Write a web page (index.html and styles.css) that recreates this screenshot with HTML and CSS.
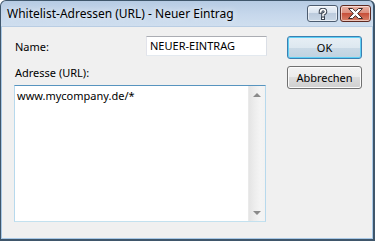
FILE: index.html
```html
<!DOCTYPE html>
<html lang="de">
<head>
<meta charset="utf-8">
<title>Whitelist-Adressen (URL) - Neuer Eintrag</title>
<link rel="stylesheet" href="styles.css">
</head>
<body>
<div class="window">
  <div class="titlebar">
    <span class="title">Whitelist-Adressen (URL) - Neuer Eintrag</span>
    <div class="caps">
      <div class="cap help">
        <svg width="10" height="12" viewBox="0 0 10 12">
          <path d="M2.5 4 Q2.5 1.5 5 1.5 Q7.5 1.5 7.5 3.8 Q7.5 5.2 5 6.3 L5 7.6" fill="none" stroke="#3a4452" stroke-width="3.6" stroke-linecap="square"/>
          <rect x="3" y="8.6" width="4" height="3.4" fill="#3a4452"/>
          <path d="M2.5 4 Q2.5 1.5 5 1.5 Q7.5 1.5 7.5 3.8 Q7.5 5.2 5 6.3 L5 7.6" fill="none" stroke="#fff" stroke-width="1.6" stroke-linecap="square"/>
          <rect x="4" y="9.6" width="2" height="1.4" fill="#fff"/>
        </svg>
      </div>
      <div class="cap close">
        <svg width="15" height="11" viewBox="0 0 15 11">
          <polygon points="0.5,0.5 4.5,0.5 7.5,3.3 10.5,0.5 14.5,0.5 9.7,5.5 14.5,10.5 10.5,10.5 7.5,7.7 4.5,10.5 0.5,10.5 5.3,5.5" fill="#fff" stroke="#3b2a28" stroke-width="1" stroke-linejoin="round"/>
        </svg>
      </div>
    </div>
  </div>
  <div class="client">
    <div class="form">
      <div class="row">
        <span class="label">Name:</span>
        <div class="input">NEUER-EINTRAG</div>
      </div>
      <div class="label addr">Adresse (URL):</div>
      <div class="textarea">
        <div class="text">www.mycompany.de/*</div>
        <div class="scrollbar">
          <div class="arrow"><span class="tri up"></span></div>
          <div class="arrow"><span class="tri down"></span></div>
        </div>
      </div>
    </div>
    <div class="buttons">
      <div class="btn default">OK</div>
      <div class="btn">Abbrechen</div>
    </div>
  </div>
</div>
</body>
</html>
```
FILE: styles.css
```css
html, body {
  margin: 0;
  padding: 0;
  background: #ffffff;
}

body {
  font-family: "Noto Sans", "DejaVu Sans", sans-serif;
  font-size: 11px;
  color: #000;
}

.window {
  width: 375px;
  height: 241px;
  box-sizing: border-box;
  border: 1px solid #3f566b;
  border-right-width: 2px;
  border-bottom-width: 2px;
  border-radius: 6px 6px 0 0;
  background: linear-gradient(#b6cbe3 0, #c7d8ec 14px, #d0dfef 26px, #cfe0f0 100%);
  display: flex;
  flex-direction: column;
}

.titlebar {
  height: 25px;
  display: flex;
  align-items: flex-start;
  padding: 0 2px 0 6px;
}

.title {
  font-size: 12px;
  line-height: 16px;
  margin-top: 5px;
  color: #000;
  text-shadow: 0 0 6px rgba(255, 255, 255, 0.9);
}

.caps {
  margin-left: auto;
  margin-top: 4px;
  display: flex;
  gap: 2px;
}

.cap {
  width: 31px;
  height: 17px;
  box-sizing: border-box;
  border: 1px solid #4c5c70;
  border-radius: 3px;
  display: flex;
  align-items: center;
  justify-content: center;
  box-shadow: inset 0 0 0 1px rgba(255, 255, 255, 0.55);
}

.cap.help {
  background: linear-gradient(#eef3f9 0, #d9e3ef 45%, #bccbdd 50%, #c9d7e6 100%);
}

.cap.close {
  border-color: #5e2a22;
  background: linear-gradient(#eab1a4 0, #dc8f7e 45%, #c7503a 50%, #d8826a 100%);
}

.client {
  flex: 1;
  margin: 0 0 0 0;
  border: 1px solid #a8c8e6;
  border-top-color: #b9cde3;
  background: #f0f0f0;
  display: flex;
  gap: 20px;
  padding: 9px 10px 0 12px;
}

.form {
  width: 253px;
  display: flex;
  flex-direction: column;
}

.row {
  height: 20px;
  display: flex;
  align-items: center;
  justify-content: space-between;
}

.label {
  line-height: 15px;
  padding-left: 1px;
}

.addr {
  margin: 9px 0 5px;
}

.input {
  width: 121px;
  height: 20px;
  box-sizing: border-box;
  border: 1px solid;
  border-color: #abadb3 #dbdfe6 #e3e9ef #e2e3ea;
  background: #fff;
  padding: 0 3px;
  line-height: 18px;
}

.textarea {
  width: 252px;
  height: 137px;
  box-sizing: border-box;
  border: 1px solid;
  border-color: #5794bf #b7d9ed #c3e1ef #b7d9ed;
  background: #fff;
  display: flex;
}

.text {
  flex: 1;
  padding: 2px 2px 0 2px;
  line-height: 15px;
}

.scrollbar {
  width: 17px;
  background: linear-gradient(90deg, #e4e4e4 0, #ececec 30%, #f4f4f4 70%, #f2f2f2 100%);
  border-left: 1px solid #eaeaea;
  box-sizing: border-box;
  display: flex;
  flex-direction: column;
  justify-content: space-between;
}

.arrow {
  height: 17px;
  display: flex;
  align-items: center;
  justify-content: center;
}

.tri {
  width: 0;
  height: 0;
  border-left: 4px solid transparent;
  border-right: 4px solid transparent;
}

.tri.up {
  border-bottom: 4px solid #8a8a8a;
}

.tri.down {
  border-top: 4px solid #8a8a8a;
}

.buttons {
  width: 75px;
  display: flex;
  flex-direction: column;
  gap: 7px;
}

.btn {
  width: 75px;
  height: 23px;
  box-sizing: border-box;
  border: 1px solid #707070;
  border-radius: 3px;
  background: linear-gradient(#f2f2f2 0, #ebebeb 50%, #dddddd 50%, #cfcfcf 100%);
  box-shadow: inset 0 0 0 1px #fbfbfb;
  display: flex;
  align-items: center;
  justify-content: center;
  line-height: 15px;
}

.btn.default {
  border-color: #3c7fb1;
  background: linear-gradient(#e7eff5 0, #dde8f0 50%, #cbdae6 50%, #c0d2e0 100%);
  box-shadow: inset 0 0 0 1px #5ed0f5;
}
```
